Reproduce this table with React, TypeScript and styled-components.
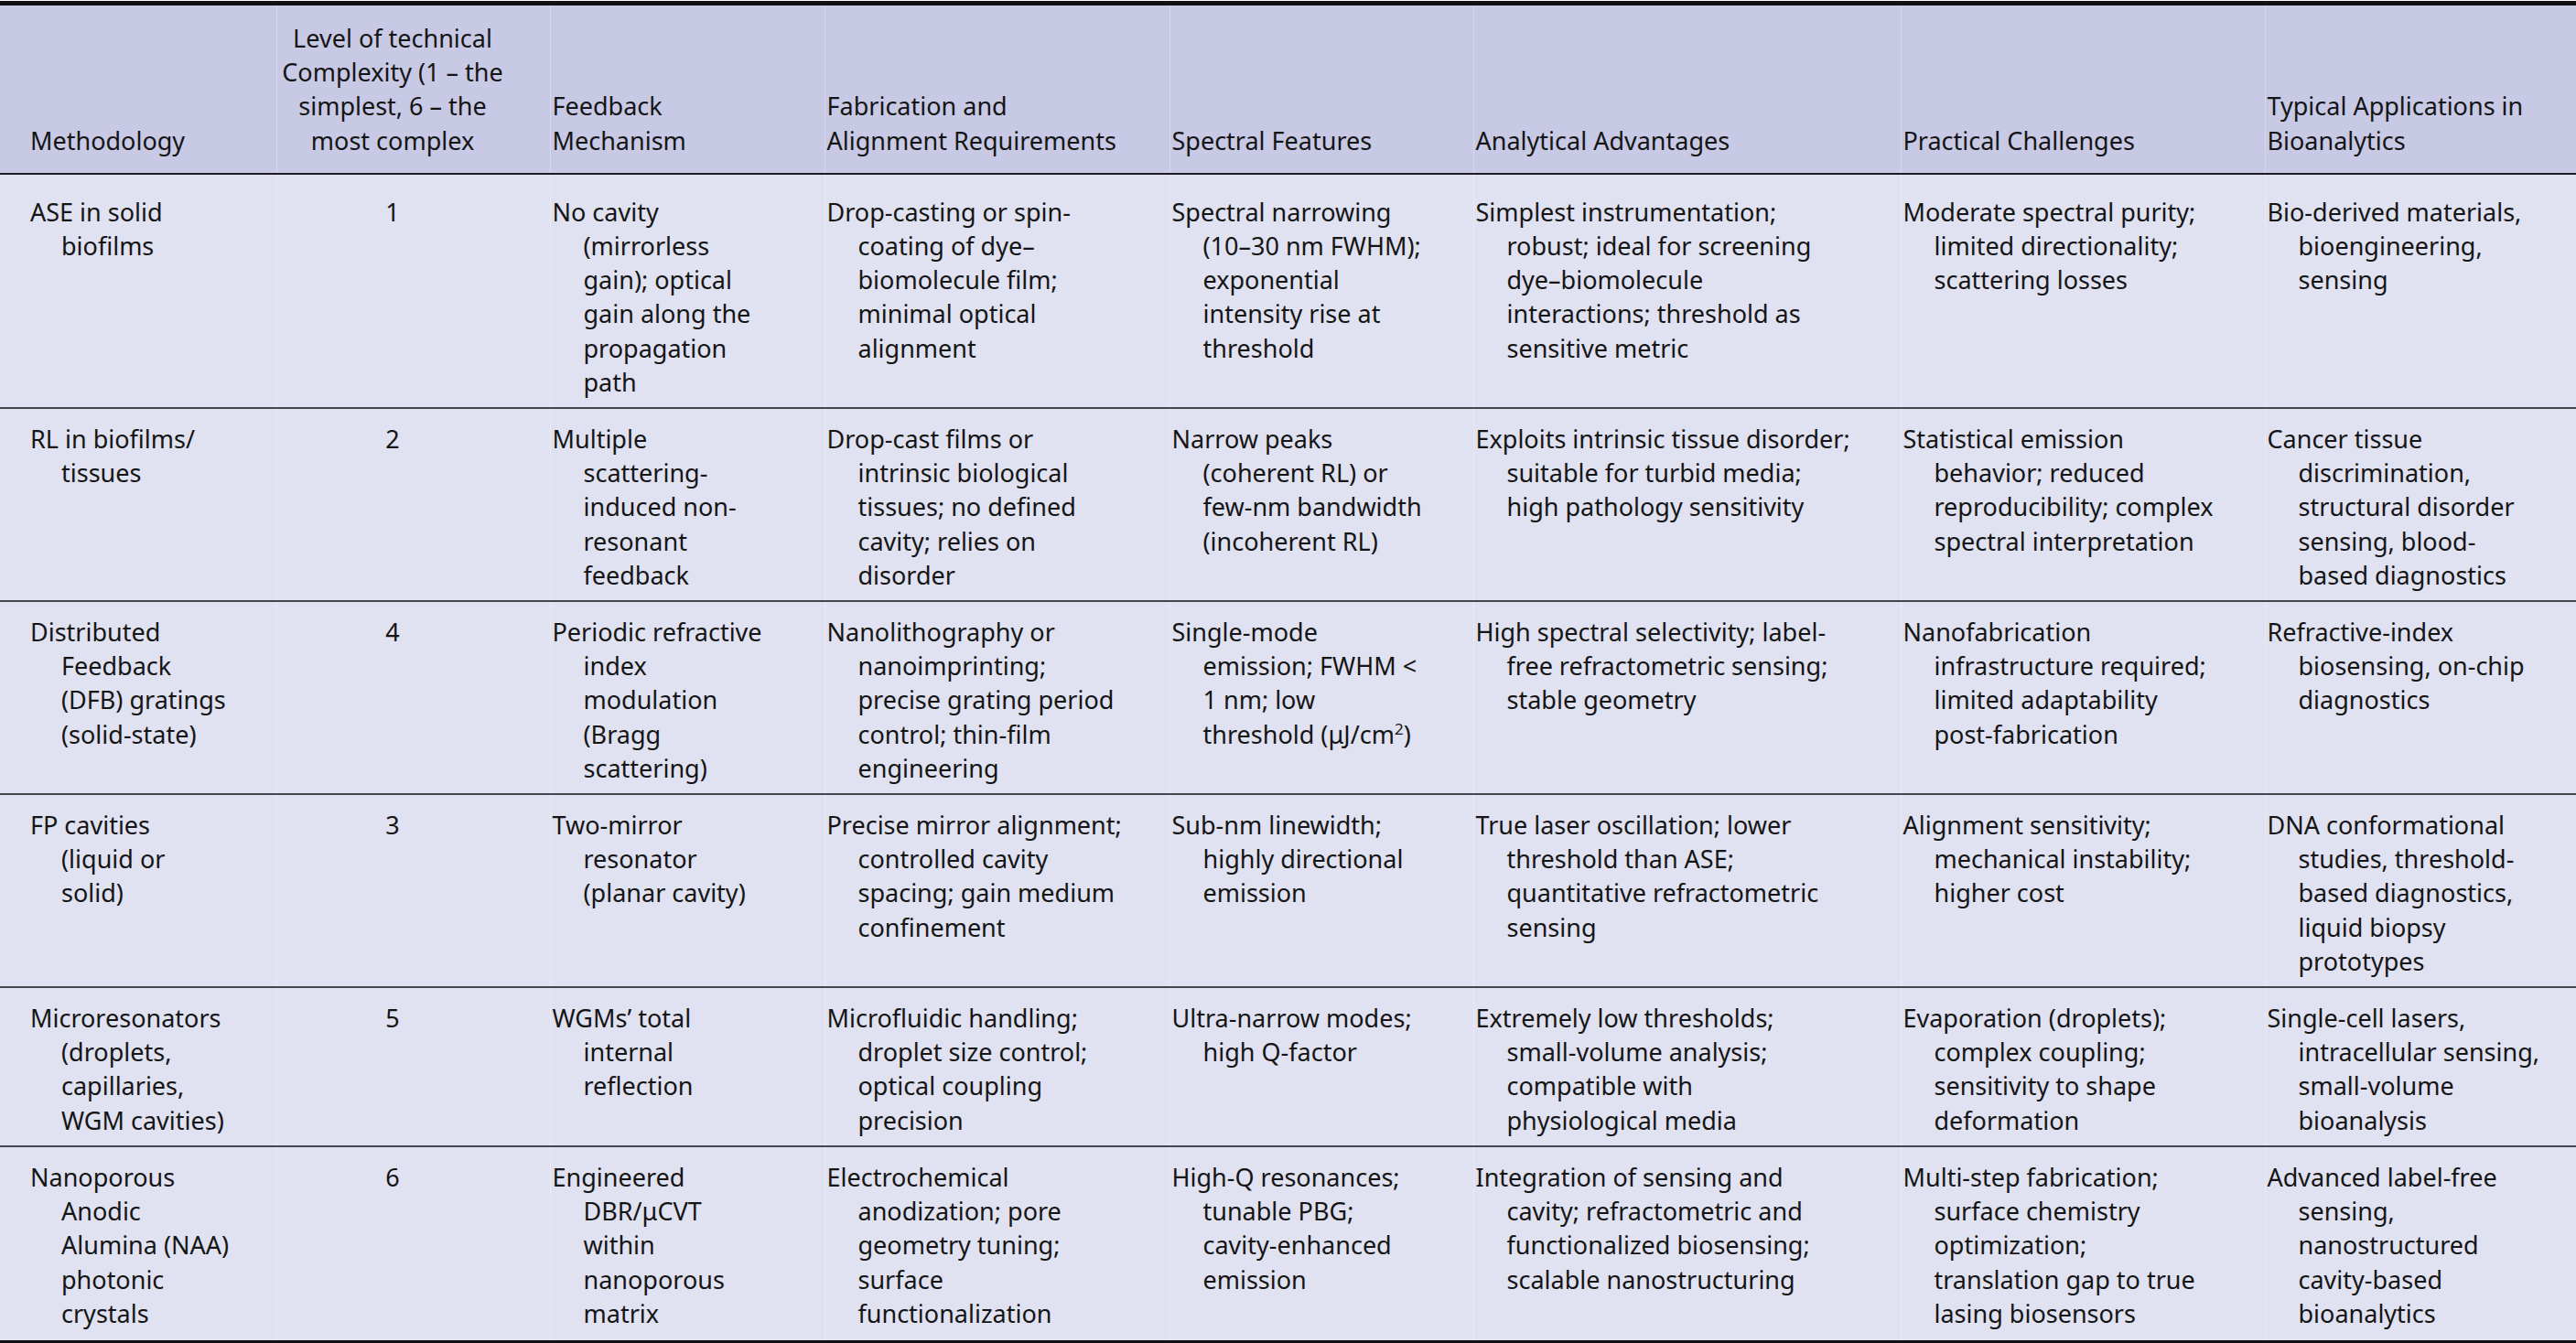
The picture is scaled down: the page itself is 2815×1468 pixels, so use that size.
import React from "react";
import styled, { createGlobalStyle } from "styled-components";

const GlobalStyle = createGlobalStyle`
  html, body {
    margin: 0;
    padding: 0;
    background: #ffffff;
  }
  body {
    padding-top: 1px;
    font-family: "Noto Sans", "Open Sans", "DejaVu Sans", sans-serif;
    color: #151515;
  }
`;

const Table = styled.table`
  width: 2815px;
  border-collapse: collapse;
  table-layout: fixed;
  font-family: "Noto Sans", "Open Sans", "DejaVu Sans", sans-serif;
  font-size: 27px;
  line-height: 37.2px;
  color: #151515;
`;

const HeadRow = styled.tr`
  background: #c7c9e5;
`;

const HeadCell = styled.th<{ $center?: boolean; $first?: boolean }>`
  font-weight: 400;
  text-align: ${(p) => (p.$center ? "center" : "left")};
  vertical-align: bottom;
  white-space: nowrap;
  padding: 17px ${(p) => (p.$center ? "47px" : "0")} 17px ${(p) => (p.$first ? "33px" : "2px")};
  border-top: 5px solid #111114;
  border-bottom: 2px solid #1c1c22;
  border-left: ${(p) => (p.$first ? "none" : "1px solid rgba(255,255,255,0.28)")};
`;

const BodyRow = styled.tr`
  background: #e0e1f1;
`;

const Cell = styled.td<{
  $center?: boolean;
  $first?: boolean;
  $top: number;
  $bottom: number;
  $last?: boolean;
}>`
  vertical-align: top;
  white-space: nowrap;
  text-align: ${(p) => (p.$center ? "center" : "left")};
  padding-top: ${(p) => p.$top}px;
  padding-bottom: ${(p) => p.$bottom}px;
  padding-right: ${(p) => (p.$center ? "47px" : "0")};
  padding-left: ${(p) => (p.$center ? "2px" : p.$first ? "67px" : "36px")};
  text-indent: ${(p) => (p.$center ? "0" : "-34px")};
  border-bottom: ${(p) => (p.$last ? "4px solid #111114" : "2px solid #45454e")};
  border-left: ${(p) => (p.$first ? "none" : "1px solid rgba(255,255,255,0.3)")};
`;

const Sup = styled.sup`
  font-size: 17px;
  line-height: 0;
  vertical-align: 10px;
`;

const widths = [302, 299, 300, 377, 332, 467, 398, 340];

const headers: string[][] = [
  ["Methodology"],
  ["Level of technical", "Complexity (1 – the", "simplest, 6 – the", "most complex"],
  ["Feedback", "Mechanism"],
  ["Fabrication and", "Alignment Requirements"],
  ["Spectral Features"],
  ["Analytical Advantages"],
  ["Practical Challenges"],
  ["Typical Applications in", "Bioanalytics"],
];

type Line = React.ReactNode;

const rows: Line[][][] = [
  [
    ["ASE in solid", "biofilms"],
    ["1"],
    ["No cavity", "(mirrorless", "gain); optical", "gain along the", "propagation", "path"],
    ["Drop-casting or spin-", "coating of dye–", "biomolecule film;", "minimal optical", "alignment"],
    ["Spectral narrowing", "(10–30 nm FWHM);", "exponential", "intensity rise at", "threshold"],
    ["Simplest instrumentation;", "robust; ideal for screening", "dye–biomolecule", "interactions; threshold as", "sensitive metric"],
    ["Moderate spectral purity;", "limited directionality;", "scattering losses"],
    ["Bio-derived materials,", "bioengineering,", "sensing"],
  ],
  [
    ["RL in biofilms/", "tissues"],
    ["2"],
    ["Multiple", "scattering-", "induced non-", "resonant", "feedback"],
    ["Drop-cast films or", "intrinsic biological", "tissues; no defined", "cavity; relies on", "disorder"],
    ["Narrow peaks", "(coherent RL) or", "few-nm bandwidth", "(incoherent RL)"],
    ["Exploits intrinsic tissue disorder;", "suitable for turbid media;", "high pathology sensitivity"],
    ["Statistical emission", "behavior; reduced", "reproducibility; complex", "spectral interpretation"],
    ["Cancer tissue", "discrimination,", "structural disorder", "sensing, blood-", "based diagnostics"],
  ],
  [
    ["Distributed", "Feedback", "(DFB) gratings", "(solid-state)"],
    ["4"],
    ["Periodic refractive", "index", "modulation", "(Bragg", "scattering)"],
    ["Nanolithography or", "nanoimprinting;", "precise grating period", "control; thin-film", "engineering"],
    [
      "Single-mode",
      "emission; FWHM <",
      "1 nm; low",
      <>
        threshold (μJ/cm<Sup>2</Sup>)
      </>,
    ],
    ["High spectral selectivity; label-", "free refractometric sensing;", "stable geometry"],
    ["Nanofabrication", "infrastructure required;", "limited adaptability", "post-fabrication"],
    ["Refractive-index", "biosensing, on-chip", "diagnostics"],
  ],
  [
    ["FP cavities", "(liquid or", "solid)"],
    ["3"],
    ["Two-mirror", "resonator", "(planar cavity)"],
    ["Precise mirror alignment;", "controlled cavity", "spacing; gain medium", "confinement"],
    ["Sub-nm linewidth;", "highly directional", "emission"],
    ["True laser oscillation; lower", "threshold than ASE;", "quantitative refractometric", "sensing"],
    ["Alignment sensitivity;", "mechanical instability;", "higher cost"],
    ["DNA conformational", "studies, threshold-", "based diagnostics,", "liquid biopsy", "prototypes"],
  ],
  [
    ["Microresonators", "(droplets,", "capillaries,", "WGM cavities)"],
    ["5"],
    ["WGMs’ total", "internal", "reflection"],
    ["Microfluidic handling;", "droplet size control;", "optical coupling", "precision"],
    ["Ultra-narrow modes;", "high Q-factor"],
    ["Extremely low thresholds;", "small-volume analysis;", "compatible with", "physiological media"],
    ["Evaporation (droplets);", "complex coupling;", "sensitivity to shape", "deformation"],
    ["Single-cell lasers,", "intracellular sensing,", "small-volume", "bioanalysis"],
  ],
  [
    ["Nanoporous", "Anodic", "Alumina (NAA)", "photonic", "crystals"],
    ["6"],
    ["Engineered", "DBR/μCVT", "within", "nanoporous", "matrix"],
    ["Electrochemical", "anodization; pore", "geometry tuning;", "surface", "functionalization"],
    ["High-Q resonances;", "tunable PBG;", "cavity-enhanced", "emission"],
    ["Integration of sensing and", "cavity; refractometric and", "functionalized biosensing;", "scalable nanostructuring"],
    ["Multi-step fabrication;", "surface chemistry", "optimization;", "translation gap to true", "lasing biosensors"],
    ["Advanced label-free", "sensing,", "nanostructured", "cavity-based", "bioanalytics"],
  ],
];

const Lines: React.FC<{ lines: Line[] }> = ({ lines }) => (
  <>
    {lines.map((l, i) => (
      <React.Fragment key={i}>
        {i > 0 && <br />}
        {l}
      </React.Fragment>
    ))}
  </>
);

export default function App() {
  return (
    <>
      <GlobalStyle />
      <Table>
        <colgroup>
          {widths.map((w, i) => (
            <col key={i} style={{ width: `${w}px` }} />
          ))}
        </colgroup>
        <thead>
          <HeadRow>
            {headers.map((h, i) => (
              <HeadCell key={i} $first={i === 0} $center={i === 1}>
                <Lines lines={h} />
              </HeadCell>
            ))}
          </HeadRow>
        </thead>
        <tbody>
          {rows.map((r, ri) => (
            <BodyRow key={ri}>
              {r.map((c, ci) => (
                <Cell
                  key={ci}
                  $first={ci === 0}
                  $center={ci === 1}
                  $top={ri === 0 ? 22 : 14}
                  $bottom={ri === rows.length - 1 ? 11 : 9}
                  $last={ri === rows.length - 1}
                >
                  <Lines lines={c} />
                </Cell>
              ))}
            </BodyRow>
          ))}
        </tbody>
      </Table>
    </>
  );
}
